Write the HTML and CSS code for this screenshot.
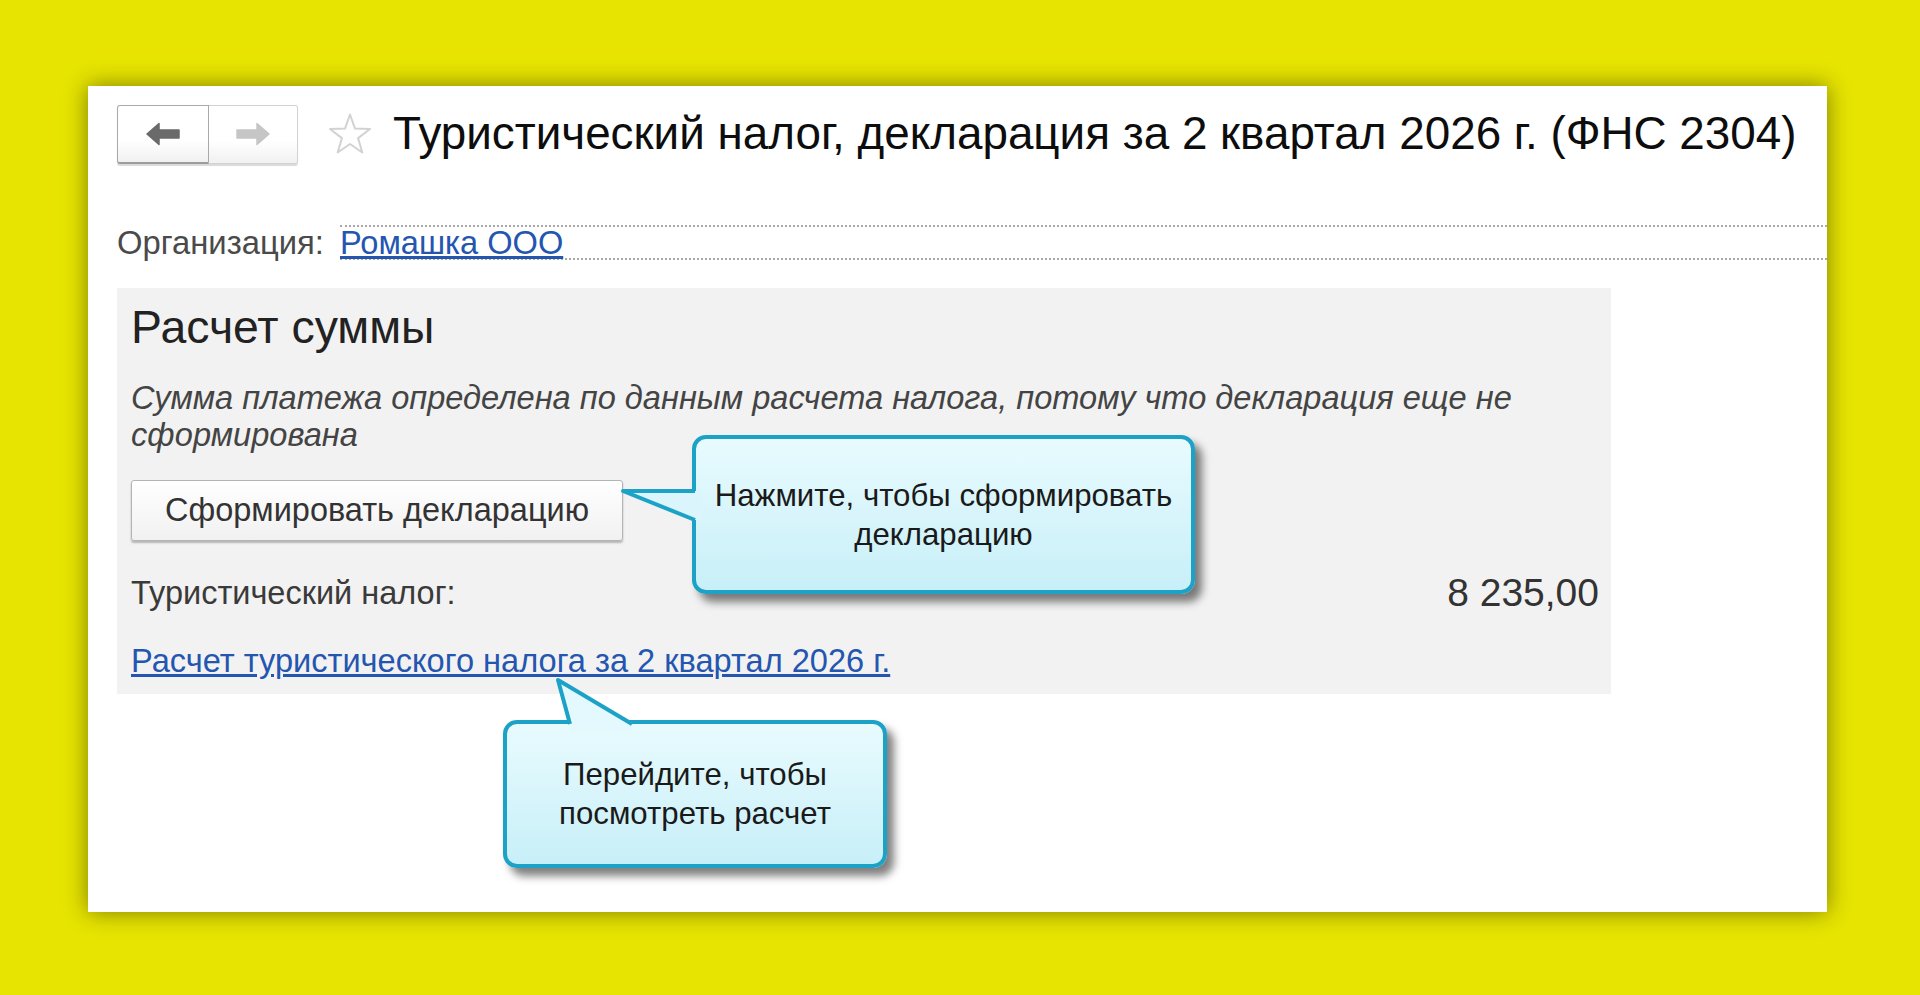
FILE: index.html
```html
<!DOCTYPE html>
<html lang="ru">
<head>
    <meta charset="UTF-8">
    <meta name="viewport" content="width=device-width, initial-scale=1.0">
    <title>Туристический налог, декларация</title>
    <link rel="stylesheet" href="styles.css">
</head>
<body>
    <div class="panel">
        <div class="header">
            <div class="nav">
                <button class="nav-btn back">
                    <svg width="34" height="24" viewBox="0 0 34 24"><path d="M1 12 L13 1.5 L13 8 L33 8 L33 16 L13 16 L13 22.5 Z" fill="#6a6a6a" stroke="#6a6a6a" stroke-width="1.5" stroke-linejoin="round"/></svg>
                </button>
                <button class="nav-btn fwd">
                    <svg width="34" height="24" viewBox="0 0 34 24"><path d="M33 12 L21 1.5 L21 8 L1 8 L1 16 L21 16 L21 22.5 Z" fill="#c6c6c6" stroke="#c6c6c6" stroke-width="1.5" stroke-linejoin="round"/></svg>
                </button>
            </div>
            <svg class="star" width="46" height="44" viewBox="0 0 46 44">
                <polygon points="23,2.5 28,16.6 43,17 31.1,26.1 35.3,40.5 23,32 10.7,40.5 14.9,26.1 3,17 18,16.6" fill="#fff" stroke="#d2d2d2" stroke-width="2" stroke-linejoin="round"/>
            </svg>
            <h1 class="title">Туристический налог, декларация за 2 квартал 2026 г. (ФНС 2304)</h1>
        </div>

        <div class="org-row">
            <span class="org-label">Организация:</span>
            <div class="org-field"><a class="link" href="#">Ромашка ООО</a></div>
        </div>

        <div class="calc">
            <h2 class="calc-title">Расчет суммы</h2>
            <p class="note">Сумма платежа определена по данным расчета налога, потому что декларация еще не сформирована</p>
            <button class="form-btn">Сформировать декларацию</button>
            <div class="tax-row">
                <span class="tax-label">Туристический налог:</span>
                <span class="amount">8 235,00</span>
            </div>
            <a class="link calc-link" href="#">Расчет туристического налога за 2 квартал 2026 г.</a>
        </div>

        <div class="callout callout-form">Нажмите, чтобы сформировать<br>декларацию</div>
        <svg class="pointer pointer-form" width="84" height="52" viewBox="0 0 84 52">
            <polygon points="3,12 82,12 82,41 74,41" fill="#daf5fb"/>
            <polyline points="75,12 3,12 75,41" fill="none" stroke="#1ca2c6" stroke-width="4" stroke-linejoin="round"/>
        </svg>

        <div class="callout callout-calc">Перейдите, чтобы<br>посмотреть расчет</div>
        <svg class="pointer pointer-calc" width="90" height="58" viewBox="0 0 90 58">
            <polygon points="19,56 19,46 7,4 81,46 81,56" fill="#e4f9fd"/>
            <polyline points="19,48 7,4 81,48" fill="none" stroke="#1ca2c6" stroke-width="4" stroke-linejoin="round"/>
        </svg>
    </div>
</body>
</html>
```

FILE: styles.css
```css
body {
    margin: 0;
    height: 995px;
    background: #e6e400;
    font-family: 'Liberation Sans', Arial, sans-serif;
    overflow: hidden;
}

.panel {
    position: relative;
    box-sizing: border-box;
    margin: 86px 0 0 88px;
    width: 1739px;
    height: 826px;
    padding: 18px 0 0 29px;
    background: #fff;
    box-shadow: 0 0 22px rgba(0, 0, 0, 0.45);
}

.header {
    display: flex;
    align-items: center;
    height: 60px;
}

.nav {
    display: flex;
    height: 59px;
    box-shadow: 0 2px 1px rgba(0, 0, 0, 0.15);
    border-radius: 3px;
}

.nav-btn {
    height: 100%;
    padding: 0;
    display: flex;
    align-items: center;
    justify-content: center;
    background: linear-gradient(#ffffff 60%, #f1f1f1);
}

.nav-btn.back {
    width: 92px;
    border: 1px solid #a9a9a9;
    border-bottom: 2px solid #9c9c9c;
    border-radius: 3px 0 0 3px;
}

.nav-btn.fwd {
    width: 89px;
    border: 1px solid #d3d3d3;
    border-left: none;
    border-radius: 0 3px 3px 0;
}

.star {
    margin-left: 29px;
    margin-right: 20px;
}

.title {
    margin: 0;
    font-size: 45.8px;
    font-weight: normal;
    color: #0d0d0d;
    white-space: nowrap;
}

.org-row {
    display: flex;
    align-items: center;
    margin-top: 61px;
    height: 35px;
}

.org-label {
    width: 223px;
    font-size: 32.8px;
    color: #4a4a4a;
}

.org-field {
    flex: 1;
    height: 35px;
    box-sizing: border-box;
    border-top: 2px dotted #a8a8a8;
    border-bottom: 2px dotted #a8a8a8;
    display: flex;
    align-items: center;
}

.link {
    color: #2456b0;
    text-decoration: underline;
    font-size: 32.6px;
}

.calc {
    box-sizing: border-box;
    width: 1494px;
    height: 406px;
    margin: 28px 0 0 0;
    padding: 13px 12px 0 14px;
    background: #f2f2f2;
}

.calc-title {
    margin: 0;
    font-size: 46.4px;
    line-height: 52px;
    font-weight: normal;
    color: #222;
}

.note {
    margin: 26px 0 0;
    font-size: 32.6px;
    line-height: 37px;
    font-style: italic;
    color: #444;
}

.form-btn {
    display: block;
    margin-top: 27px;
    width: 492px;
    height: 61px;
    border: 1px solid #b4b4b4;
    border-radius: 3px;
    background: linear-gradient(#ffffff, #f1f1f1);
    box-shadow: 0 2px 2px rgba(0, 0, 0, 0.25);
    font-family: inherit;
    font-size: 32.5px;
    color: #333;
}

.tax-row {
    display: flex;
    justify-content: space-between;
    align-items: center;
    margin-top: 30px;
    height: 44px;
}

.tax-label {
    font-size: 32.5px;
    color: #3a3a3a;
}

.amount {
    font-size: 39px;
    color: #333;
}

.calc-link {
    display: inline-block;
    margin-top: 27px;
    line-height: 38px;
}

.callout {
    position: absolute;
    box-sizing: border-box;
    display: flex;
    align-items: center;
    justify-content: center;
    text-align: center;
    border: 4px solid #1ca2c6;
    border-radius: 14px;
    background: linear-gradient(#e8fbfe, #c8eff8);
    box-shadow: 7px 8px 8px rgba(0, 0, 0, 0.5);
    font-size: 31.2px;
    line-height: 39px;
    color: #1a1a1a;
}

.callout-form {
    left: 604px;
    top: 349px;
    width: 503px;
    height: 159px;
}

.callout-calc {
    left: 415px;
    top: 634px;
    width: 384px;
    height: 148px;
}

.pointer {
    position: absolute;
}

.pointer-form {
    left: 532px;
    top: 393px;
}

.pointer-calc {
    left: 463px;
    top: 590px;
}
```
